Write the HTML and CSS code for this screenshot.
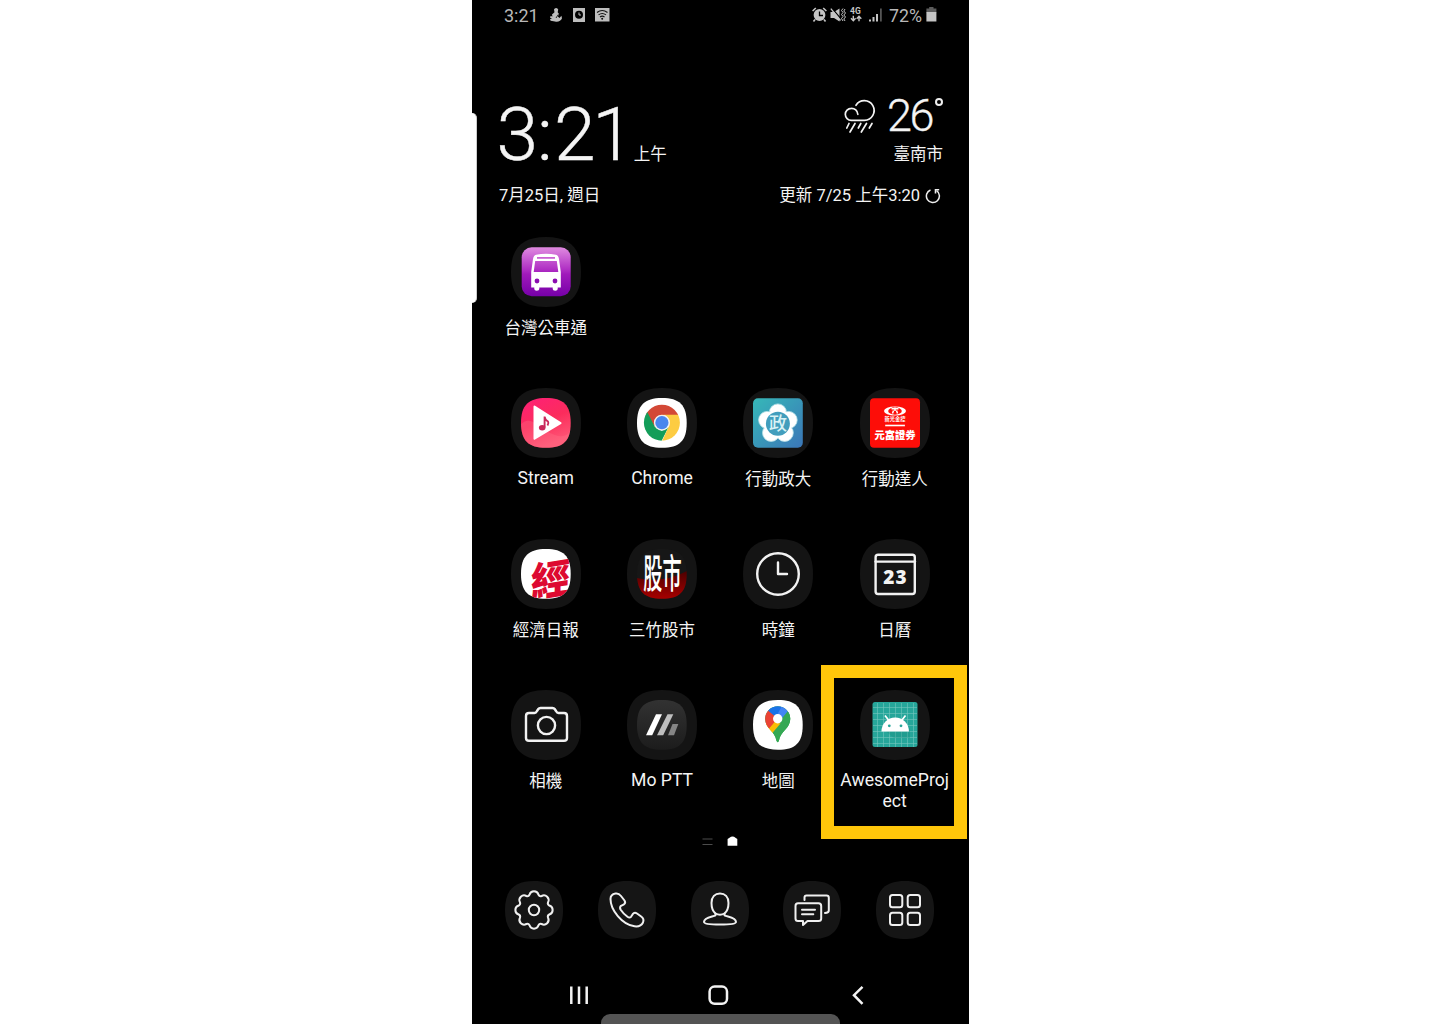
FILE: index.html
```html
<!DOCTYPE html>
<html lang="zh-Hant">
<head>
<meta charset="utf-8">
<title>Home screen</title>
<link rel="stylesheet" href="styles.css">
</head>
<body>
<svg class="defs" width="0" height="0" aria-hidden="true">
  <defs>
    <path id="squircle" d="M35 0C59 0 70 11 70 35S59 70 35 70 0 59 0 35 11 0 35 0Z"/>
    <clipPath id="inner"><path d="M34.900 10C52.500 10 59.700 17 59.700 34.900S52.500 59.700 34.900 59.700 10 52.500 10 34.900 17.500 10 34.900 10Z"/></clipPath>
    <clipPath id="pin"><path d="M34.700 16.200A12.600 12.600 0 0 1 47.300 28.800C47.300 38.500 37.500 41 36 50.500Q34.700 54 33.400 50.500C32 41 22.100 38.500 22.100 28.800A12.600 12.600 0 0 1 34.700 16.200Z"/></clipPath>
    <clipPath id="disc"><circle cx="34.900" cy="34.700" r="18"/></clipPath>
    <linearGradient id="purple" x2="0" y2="1"><stop offset="0" stop-color="#e08be0"/><stop offset=".45" stop-color="#b030c4"/><stop offset=".55" stop-color="#a01abb"/><stop offset="1" stop-color="#7600a8"/></linearGradient>
    <linearGradient id="pink" x2=".4" y2="1"><stop offset="0" stop-color="#ff1f78"/><stop offset=".55" stop-color="#fb2c5c"/><stop offset="1" stop-color="#ff5575"/></linearGradient>
    <linearGradient id="teal" x2="1" y2="1"><stop offset="0" stop-color="#36b8b8"/><stop offset="1" stop-color="#3b76b8"/></linearGradient>
    <linearGradient id="red" x2="0" y2="1"><stop offset="0" stop-color="#4c0000"/><stop offset="1" stop-color="#a80000"/></linearGradient>
    <linearGradient id="dark" x2="0" y2="1"><stop offset="0" stop-color="#323232"/><stop offset="1" stop-color="#1c1c1c"/></linearGradient>
  </defs>
</svg>

<main class="phone">
  <div class="edge-handle"></div>

  <header class="status">
    <span class="status-time">3:21</span>
    <svg class="status-left" width="64" height="18" viewBox="0 0 64 18" fill="#bdbdbd">
      <path d="M5 3.500A2.200 2.200 0 0 1 9.200 3.500L8.700 6.300 10 8 8.800 10.500 10.500 12 12.400 9.800 13 12.200C12 15 9 16.300 6 15.500L1.600 14.700 1 13 3 12.800 1 11.400 1.600 10 3.500 10.500 3 8.500 5.500 6.300Z"/>
      <path d="M9.300 8.500L7 12" stroke="#000" stroke-width=".8"/>
      <path d="M24 2H36V16H24Z"/><circle cx="30" cy="8.800" r="4" fill="#000"/><path d="M30 6.500V9H32" fill="none" stroke="#bdbdbd"/>
      <path d="M46 2H60.500V15.500H46Z"/><g fill="none" stroke="#111" stroke-width="1.100"><path d="M48 6.500Q53.200 2.500 58.500 6.500M49.500 8.900Q53.200 6 57 8.900M51 11Q53.200 9.200 55.500 11"/></g><circle cx="53.200" cy="12.700" r="1" fill="#111"/>
    </svg>
    <svg class="status-right" width="72" height="18" viewBox="0 0 72 18" fill="#c4c4c4">
      <circle cx="8.500" cy="9" r="5.900"/><path d="M1.600 5L4.800 2M15.400 5L12.200 2M4 13.500L2.500 15.500M13 13.500L14.500 15.500" stroke="#c4c4c4" stroke-width="1.600"/><path d="M8.500 5.500V9.500H12" fill="none" stroke="#000" stroke-width="1.300"/>
      <path d="M19.500 6H23L28.500 2.500V15.500L23 12H19.500Z"/><path d="M20.700 1.800L30.500 13.500" stroke="#000" stroke-width="1.200"/><path d="M19.800 2.700L29.500 14.500" stroke="#c4c4c4" stroke-width="1.300"/><path d="M32 2.500L30.500 4.500 32 6.500 30.500 8.500 32 10.500 30.500 12.500 32 15M34 3L32.800 5 34.500 7 32.800 9 34.500 11 32.800 13 34 15" fill="none" stroke="#c4c4c4"/>
      <text class="tiny" x="39" y="8">4G</text>
      <path d="M42.300 9.800V14.500M40 12.200L42.300 14.700 44.600 12.200M48 15.200V10.700M45.700 12.700L48 10.200 50.300 12.700" fill="none" stroke="#c4c4c4" stroke-width="1.400"/>
      <path d="M58 13.500H60V15.500H58ZM61.500 11H63.500V15.500H61.500ZM65 8H67V15.500H65Z"/><path d="M69 2.500H70.800V15.500H69Z" fill="#555"/>
    </svg>
    <span class="status-battery">72%</span>
    <svg width="11" height="16" viewBox="0 0 11 16"><path d="M3.200 0H7.500V1.500H10.400V5.500H.4V1.500H3.200Z" fill="#5c5c5c"/><path d="M.4 5H10.400V14.500H.4Z" fill="#c4c4c4"/></svg>
  </header>

  <section class="widget">
    <div class="clock"><span class="clock-time">3<span class="colon">:</span>21</span><span class="ampm">上午</span></div>
    <div class="weather">
      <div class="temp">
        <svg width="36" height="38" viewBox="0 0 36 38" fill="none" stroke="#f2f2f2" stroke-width="1.700" stroke-linecap="round"><path d="M14.800 16.300A6.300 6.300 0 0 0 8.300 10.300A6 6 0 0 0 8.300 22.300H21.500A9.800 9.800 0 1 0 13 7.300M6 25.500L3.800 30M12 25.500L7 34M17.800 25.500L15.300 30M23.500 25.500L18.300 34M29 25.500L26.300 30"/></svg>
        <span class="degrees">26</span><span class="ring"></span>
      </div>
      <div class="city">臺南市</div>
    </div>
    <div class="date">7月25日, 週日</div>
    <div class="updated">更新 7/25 上午3:20
      <svg width="16" height="16" viewBox="0 0 16 16" fill="none" stroke="#eee" stroke-width="1.500"><path d="M5.500 2A6.500 6.500 0 1 0 11.600 2.700"/><path d="M14.200 1.700H10.500V5.400" stroke-width="1.600"/></svg>
    </div>
  </section>

  <section class="apps">
    <div class="app app-single">
      <svg class="tile" viewBox="0 0 70 70"><use href="#squircle" class="base"/>
        <rect x="10.700" y="10.200" width="49" height="49" rx="10" fill="url(#purple)"/>
        <path fill="#fff" fill-rule="evenodd" d="M25 17.800Q35 15.500 45 17.800Q47.500 18.500 48 22L49.800 35V50.500H46.700V52Q46.700 53.700 44.200 53.700T41.700 52V50.500H28.300V52Q28.300 53.700 25.800 53.700T23.300 52V50.500H20.200V35L22 22Q22.500 18.500 25 17.800ZM24.200 24L22.700 35H47.300L45.800 24ZM26 20V21.800H44V20Z"/>
        <circle cx="26" cy="44" r="2.400" fill="#8b0db0"/><circle cx="44" cy="44" r="2.400" fill="#8b0db0"/>
      </svg>
      <span class="label">台灣公車通</span>
    </div>

    <div class="app">
      <svg class="tile" viewBox="0 0 70 70"><use href="#squircle" class="base"/>
        <g clip-path="url(#inner)"><path fill="url(#pink)" d="M10 10H60V60H10Z"/><path fill="#ff7b8f" opacity=".3" d="M10 36Q17 29 25 36T44 47T60 42V60H10Z"/></g>
        <path d="M23.500 18.500L49.500 35.200 23.500 50.700Z" fill="#fff" stroke="#fff" stroke-width="2" stroke-linejoin="round"/>
        <ellipse cx="31.200" cy="39.700" rx="3.300" ry="2.700" fill="#c9285b"/><path d="M33.600 39.500V28.500Q34 32 37 33.500Q38 35 36.500 37.500" fill="none" stroke="#c9285b" stroke-width="1.900"/>
      </svg>
      <span class="label latin">Stream</span>
    </div>
    <div class="app">
      <svg class="tile" viewBox="0 0 70 70"><use href="#squircle" class="base"/>
        <path clip-path="url(#inner)" fill="#fff" d="M10 10H60V60H10Z"/>
        <g clip-path="url(#disc)"><path fill="#d34836" d="M10 10H60V27H34.700V35L27.800 39 17 22Z"/><path fill="#139d59" d="M19.500 22.500L27.800 38.800 34.700 42.700 41.600 39 33 56H10V22Z"/><path fill="#fdcc42" d="M34.700 26.700H60V60H32L41.600 38.700A8 8 0 0 0 34.700 26.700Z"/></g>
        <circle cx="34.900" cy="34.700" r="8" fill="#f1f1f1"/><circle cx="34.900" cy="34.700" r="6.600" fill="#4a87ee"/>
      </svg>
      <span class="label latin">Chrome</span>
    </div>
    <div class="app">
      <svg class="tile" viewBox="0 0 70 70"><use href="#squircle" class="base"/>
        <rect x="10" y="10.200" width="49.800" height="49.500" rx="5" fill="url(#teal)"/>
        <g fill="#fff" stroke="#b9e2e9" stroke-width=".8"><circle cx="34.900" cy="24.500" r="8.600"/><circle cx="45.600" cy="32" r="8.600"/><circle cx="41.700" cy="44.800" r="8.600"/><circle cx="28.100" cy="44.800" r="8.600"/><circle cx="24.200" cy="32" r="8.600"/></g>
        <circle cx="34.900" cy="35.700" r="14" fill="#fff"/><circle cx="34.900" cy="35.700" r="12" fill="#429ebd"/>
        <text class="seal" x="34.900" y="42.300">政</text>
      </svg>
      <span class="label">行動政大</span>
    </div>
    <div class="app">
      <svg class="tile" viewBox="0 0 70 70"><use href="#squircle" class="base"/>
        <rect x="10" y="10.200" width="50" height="49.500" rx="4" fill="#fd0d08"/>
        <ellipse cx="35" cy="23" rx="11" ry="4.500" fill="#fff"/><ellipse cx="35" cy="23" rx="6.800" ry="3.700" fill="#fd0d08"/><path d="M31.500 20.700H38.500M35 19.500V23M33.500 22.500L32.500 25.500M36.500 22.500L37.500 25.500" stroke="#fff" stroke-width="1.500"/>
        <text class="brand-small" x="35" y="33.300">新光金控</text>
        <path d="M25.200 37.500H44.900" stroke="#fff" stroke-width="1.600"/>
        <text class="brand" x="35" y="50.700">元富證券</text>
      </svg>
      <span class="label">行動達人</span>
    </div>

    <div class="app">
      <svg class="tile" viewBox="0 0 70 70"><use href="#squircle" class="base"/>
        <g clip-path="url(#inner)"><path fill="#fff" d="M10 10H60V60H10Z"/><text class="brush" transform="translate(19.500 59) rotate(-9) skewX(-10)">經</text></g>
      </svg>
      <span class="label">經濟日報</span>
    </div>
    <div class="app">
      <svg class="tile" viewBox="0 0 70 70"><use href="#squircle" class="base"/>
        <g clip-path="url(#inner)"><path fill="#171717" d="M10 10H60V60H10Z"/><path fill="url(#red)" d="M10 39Q35 45 60 32V60H10Z"/></g>
        <text class="stock" transform="translate(35.500 49.300) scale(.48 1)">股市</text>
      </svg>
      <span class="label">三竹股市</span>
    </div>
    <div class="app">
      <svg class="tile line" viewBox="0 0 70 70"><use href="#squircle" class="base"/>
        <circle cx="35" cy="35" r="20.800"/><path d="M35 23.500V35H44"/>
      </svg>
      <span class="label">時鐘</span>
    </div>
    <div class="app">
      <svg class="tile line" viewBox="0 0 70 70"><use href="#squircle" class="base"/>
        <rect x="15.600" y="15.800" width="39.200" height="39.200" rx="2.500"/><path d="M15.600 22.600H55"/><text class="day" x="35.500" y="45">23</text>
      </svg>
      <span class="label">日曆</span>
    </div>

    <div class="app">
      <svg class="tile line" viewBox="0 0 70 70"><use href="#squircle" class="base"/>
        <path d="M18 23H23.500Q25 23 26 21L27.300 19Q28 18 29.500 18H41.500Q43 18 43.700 19L45 21Q46 23 47.500 23H53Q56 23 56 26V48Q56 50.800 53 50.800H18Q15 50.800 15 48V26Q15 23 18 23Z"/><circle cx="35.500" cy="35.500" r="8.600"/>
      </svg>
      <span class="label">相機</span>
    </div>
    <div class="app">
      <svg class="tile" viewBox="0 0 70 70"><use href="#squircle" class="base"/>
        <path clip-path="url(#inner)" fill="url(#dark)" d="M10 10H60V60H10Z"/>
        <path fill="#fff" d="M29 24.300H35L25.200 45.300H19Z"/><path fill="#bebebe" d="M40.500 24.300H46.300L36.200 45.300H30Z"/><path fill="#858585" d="M45.500 34H51.300L47 45.300H41Z"/>
      </svg>
      <span class="label latin">Mo PTT</span>
    </div>
    <div class="app">
      <svg class="tile" viewBox="0 0 70 70"><use href="#squircle" class="base"/>
        <path clip-path="url(#inner)" fill="#fff" d="M10 10H60V60H10Z"/>
        <g clip-path="url(#pin)"><path fill="#34a853" d="M20 14H50V56H20Z"/><path fill="#fbbc04" d="M20 36L34.700 20 42 28.500 27 46 20 44Z"/><path fill="#ea4335" d="M20 14L34.700 28.800 25.500 39.500 20 36Z"/><path fill="#1a73e8" d="M20 16V14H42L34.700 28.800 25.300 20.800Z"/><path fill="#4285f4" d="M40 14H50V19L34.700 36.500V28.800L34 25Z"/><path fill="#34a853" d="M45 21L30 39V56H50V20Z"/><path fill="#fbbc04" d="M25.500 39.500L31.500 32.200 37.500 33.500 28 44.500Z"/></g>
        <circle cx="34.700" cy="28.800" r="4.700" fill="#fff"/>
      </svg>
      <span class="label">地圖</span>
    </div>
    <div class="app">
      <svg class="tile" viewBox="0 0 70 70"><use href="#squircle" class="base"/>
        <rect x="12.500" y="12.100" width="45" height="45" rx="2.500" fill="#26a69a"/>
        <path d="M17.500 13V57M23.500 13V57M29.500 13V57M35.500 13V57M41.500 13V57M47.500 13V57M53.500 13V57M13 17.500H57M13 23.500H57M13 29.500H57M13 35.500H57M13 41.500H57M13 47.500H57M13 53.500H57" stroke="#73c6be" stroke-width=".6"/>
        <path fill="#16877c" opacity=".3" d="M26 41.500L34 48H50V38Z"/>
        <path fill="#fff" d="M21.500 41.500A13.700 14 0 0 1 48.900 41.500Z"/><path d="M25 25.500L28.500 30M45.500 25.500L42 30" stroke="#fff" stroke-width="1.700"/><circle cx="29.300" cy="35.800" r="1.400" fill="#26a69a"/><circle cx="41" cy="35.800" r="1.400" fill="#26a69a"/>
      </svg>
      <span class="label latin">AwesomeProj<br>ect</span>
      <div class="highlight"></div>
    </div>
  </section>

  <div class="pages">
    <svg width="36" height="11" viewBox="0 0 36 11"><path d="M.5 3H10.500M.5 8.500H10.500" stroke="#4c4c4c" stroke-width="1.100"/><path d="M25.600 3L29 .8Q30.500 0 32 .8L35.300 3V9.800H25.600Z" fill="#fff"/></svg>
  </div>

  <nav class="dock">
    <svg viewBox="0 0 58 58"><use href="#squircle" class="base" transform="scale(.829)"/>
      <path transform="translate(29 29)" d="M15.300-4.500A4.700 4.700 0 0 1 15.300 4.500A2.600 2.600 0 0 0 14 7.640A4.700 4.700 0 0 1 7.640 14A2.600 2.600 0 0 0 4.500 15.300A4.700 4.700 0 0 1-4.500 15.300A2.600 2.600 0 0 0-7.640 14A4.700 4.700 0 0 1-14 7.640A2.600 2.600 0 0 0-15.300 4.500A4.700 4.700 0 0 1-15.300-4.500A2.600 2.600 0 0 0-14-7.640A4.700 4.700 0 0 1-7.640-14A2.600 2.600 0 0 0-4.500-15.300A4.700 4.700 0 0 1 4.500-15.300A2.600 2.600 0 0 0 7.640-14A4.700 4.700 0 0 1 14-7.640A2.600 2.600 0 0 0 15.300-4.500Z"/><circle cx="29" cy="29" r="5.200"/></svg>
    <svg viewBox="0 0 58 58"><use href="#squircle" class="base" transform="scale(.829)"/>
      <path d="M12.500 18C12.500 15 15 13 17.500 12.500C20 12 21.500 13 23 15L26.500 19.500C27.500 21 27 22.500 26 23.300L23 24.800C21.800 25.800 21.800 27 22.500 28.500C24.500 31.500 27 34 29.500 35.800C31 36.900 32 36.900 33 35.800L34.700 33.200C35.700 31.800 37.500 31.500 39 32.500L43.500 35.800C45.500 37.300 46 39 45 41.500C43.500 44.500 40 45.800 36.500 45.300C24 43.500 12.500 29 12.500 18Z"/></svg>
    <svg viewBox="0 0 58 58"><use href="#squircle" class="base" transform="scale(.829)"/>
      <path d="M24.500 32.500C21.500 30 20.500 26 20.500 22C20.500 16 24 12.500 29 12.500S37.500 16 37.500 22C37.500 26 36.500 30 33.500 32.500V34.300C36 35.800 45 35.800 45 41C45 43 38 43.500 29 43.500S13 43 13 41C13 35.800 22 35.800 24.500 34.300Z"/><path d="M24.500 32.500Q29 35 33.500 32.500"/></svg>
    <svg viewBox="0 0 58 58"><use href="#squircle" class="base" transform="scale(.829)"/>
      <path d="M21.500 19V16.500Q21.500 14.500 23.500 14.500H43.500Q45.800 14.500 45.800 16.800V29.500Q45.800 31.800 42 32"/><path d="M15 22.300H35.500Q38.200 22.300 38.200 25V37.500Q38.200 40 35.500 40H24.500L20 44V40H15Q12.500 40 12.500 37.500V25Q12.500 22.300 15 22.300ZM19 28.800H32M19 33.200H30.300"/></svg>
    <svg viewBox="0 0 58 58"><use href="#squircle" class="base" transform="scale(.829)"/>
      <rect x="14" y="14" width="12.300" height="12.300" rx="2.500"/><rect x="31.700" y="14" width="12.300" height="12.300" rx="2.500"/><rect x="14" y="31.700" width="12.300" height="12.300" rx="2.500"/><rect x="31.700" y="31.700" width="12.300" height="12.300" rx="2.500"/></svg>
  </nav>

  <nav class="navbar">
    <svg width="22" height="22" viewBox="0 0 22 22"><path d="M3.300 2.500V20M11 2.500V20M18.700 2.500V20"/></svg>
    <svg width="22" height="22" viewBox="0 0 22 22"><rect x="1.600" y="2.600" width="17.400" height="17.200" rx="5"/></svg>
    <svg width="22" height="22" viewBox="0 0 22 22"><path d="M15.500 2.800L7 11.200 15.500 19.800"/></svg>
  </nav>
  <div class="bottom-handle"></div>
</main>
</body>
</html>
```
FILE: styles.css
```css
* { box-sizing: border-box; }

body {
  margin: 0;
  background: #fff;
  font-family: Roboto, "Noto Sans CJK TC", sans-serif;
  color: #f4f4f4;
}

svg { display: block; flex: none; }
.defs { position: absolute; }

.phone {
  position: relative;
  display: flex;
  flex-direction: column;
  width: 497px;
  height: 1024px;
  margin-left: 472px;
  background: #000;
  overflow: hidden;
}

.edge-handle {
  position: absolute;
  left: 0;
  top: 113px;
  width: 4.5px;
  height: 190px;
  background: #fff;
  border-right: 1px solid #ccc;
  border-radius: 0 5px 5px 0;
}

/* Status bar */
.status {
  display: flex;
  align-items: center;
  height: 30px;
  padding: 0 32px;
  font-size: 18px;
  color: #b8b8b8;
}
.status-time { width: 45px; }
.status-right { margin-left: auto; }
.status-battery { width: 37px; margin-left: 6px; font-size: 17.8px; }
.tiny { font: 700 8.500px Roboto, sans-serif; }

/* Clock and weather */
.widget {
  display: grid;
  grid-template-columns: 1fr 1fr;
  grid-template-rows: 112px 28px;
  height: 207px;
  padding: 42px 26px 0 27px;
}
.clock { display: flex; align-items: baseline; height: 112px; padding-top: 18px; }
.clock-time {
  margin-left: -2.500px;
  font-size: 75px;
  font-weight: 300;
  line-height: 88px;
  letter-spacing: -3.200px;
  -webkit-text-stroke: .4px #f4f4f4;
}
.colon { margin: 0 4.500px 0 2px; }
.ampm { margin-left: 3px; font-size: 16.500px; }
.weather { display: flex; flex-direction: column; align-items: flex-end; }
.temp { display: flex; height: 70px; padding-top: 26px; }
.degrees {
  margin: -8px 0 0 8px;
  font-size: 45px;
  font-weight: 300;
  line-height: 52px;
  letter-spacing: -2.500px;
  -webkit-text-stroke: .3px #f4f4f4;
}
.ring { width: 8px; height: 8px; margin: 0 0 0 3px; border: 1.800px solid #eee; border-width: 2px; border-radius: 50%; }
.city { margin-top: 1px; font-size: 16.500px; line-height: 24px; }
.date, .updated { height: 24px; font-size: 16.500px; line-height: 24px; white-space: nowrap; }
.updated { display: flex; justify-content: flex-end; align-items: center; gap: 5px; padding-right: 2px; }

/* App grid */
.apps {
  display: grid;
  grid-template-columns: repeat(4, 116.300px);
  grid-template-rows: repeat(4, 151px);
  height: 597px;
  padding-left: 15.600px;
}
.app { position: relative; display: flex; flex-direction: column; align-items: center; }
.app-single { grid-column: 1 / -1; width: 116.300px; }
.tile { width: 70px; height: 70px; }
.base { fill: #141414; stroke: none; }
.line { fill: none; stroke: #f2f2f2; stroke-width: 2.400; stroke-linecap: round; stroke-linejoin: round; }
.label { margin-top: 11px; font-size: 16.500px; line-height: 21px; text-align: center; white-space: nowrap; }
.latin { margin-top: 10px; font-size: 17.600px; }

.highlight {
  position: absolute;
  left: -15.300px;
  top: -25.500px;
  width: 146px;
  height: 174.500px;
  border: 13px solid #ffc60a;
}

.seal { font: 500 18px "Noto Sans CJK TC", sans-serif; fill: #d8f2f5; text-anchor: middle; }
.brand { font: 900 10.300px "Noto Sans CJK TC", sans-serif; fill: #fff; text-anchor: middle; }
.brand-small { font: 700 5.200px "Noto Sans CJK TC", sans-serif; fill: #fff; text-anchor: middle; }
.brush { font: 900 40px "Noto Sans CJK TC", sans-serif; fill: #dd0a30; }
.stock { font: 500 40px "Noto Sans CJK TC", sans-serif; fill: #fff; text-anchor: middle; }
.day { font: 800 19px "Open Sans", sans-serif; fill: #f2f2f2; stroke: none; text-anchor: middle; letter-spacing: 1px; }

/* Page indicator */
.pages { height: 47px; padding: 2px 0 0 230px; }

/* Dock */
.dock { display: flex; gap: 34.750px; height: 92px; padding-left: 33px; }
.dock svg { width: 58px; height: 58px; fill: none; stroke: #f0f0f0; stroke-width: 2; stroke-linejoin: round; stroke-linecap: round; }
.dock .base { fill: #151515; stroke: none; }

/* System navigation */
.navbar { display: flex; justify-content: space-between; height: 40px; margin-top: 11px; padding: 0 100px 0 96px; }
.navbar svg { fill: none; stroke: #f2f2f2; stroke-width: 2.500; }
.bottom-handle {
  position: absolute;
  left: 129px;
  top: 1013.500px;
  width: 239px;
  height: 20px;
  border-radius: 9px;
  background: #545454;
}
```
